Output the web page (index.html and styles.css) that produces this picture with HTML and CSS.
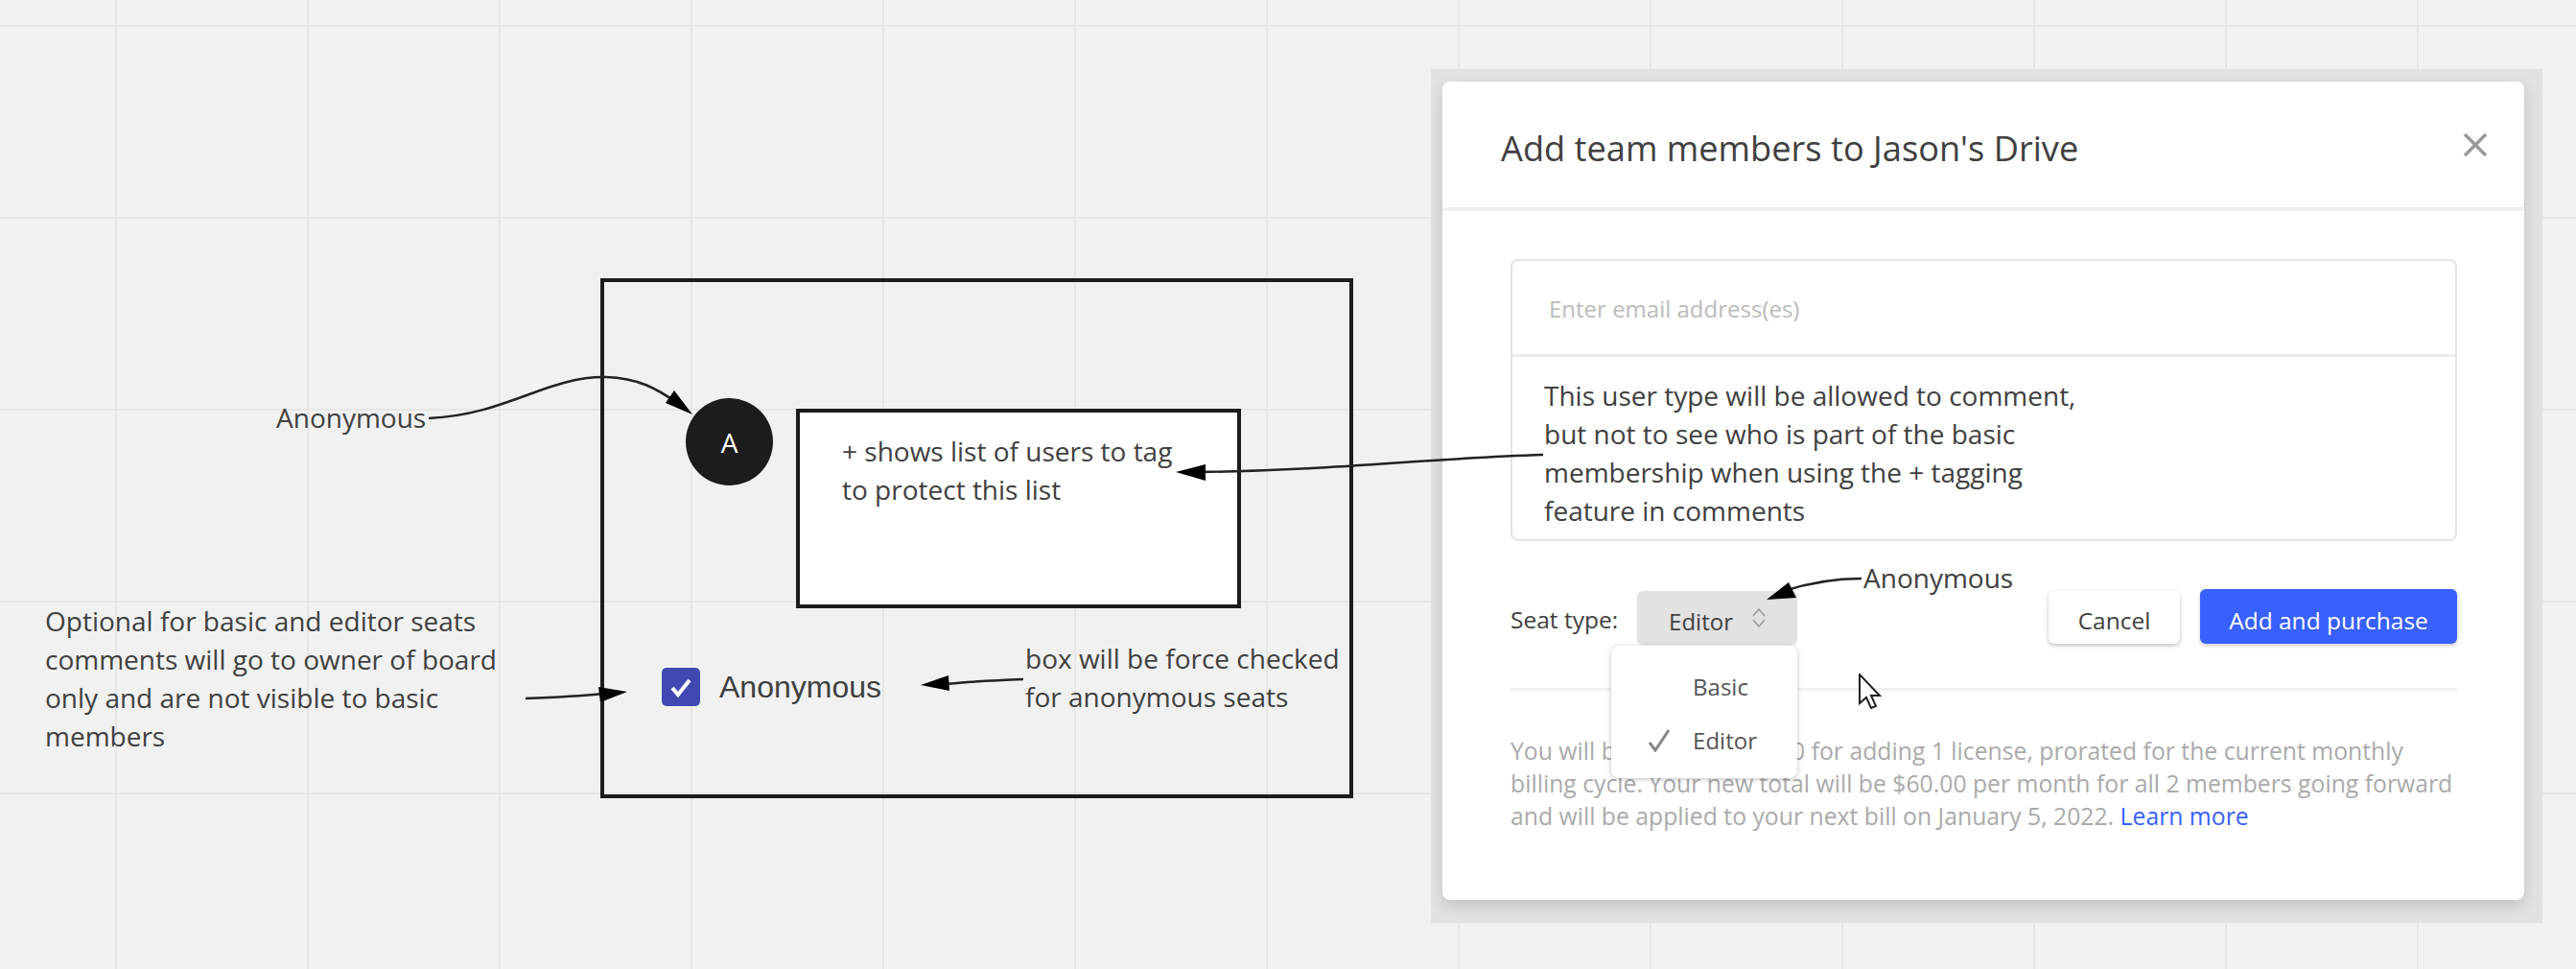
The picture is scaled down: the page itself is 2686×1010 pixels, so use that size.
FILE: index.html
```html
<!DOCTYPE html>
<html lang="en">
<head>
    <meta charset="UTF-8">
    <title>Anonymous seat type - board</title>
    <link rel="stylesheet" href="styles.css">
</head>
<body>
    <div class="board">
        <!-- frame with the mock comment -->
        <div class="frame"></div>
        <div class="avatar">A</div>
        <div class="comment-box">+ shows list of users to tag<br>to protect this list</div>
        <div class="checkbox">
            <svg viewBox="0 0 40 40" width="40" height="40"><path d="M11 21l6 7 12-15" fill="none" stroke="#fff" stroke-width="4"/></svg>
        </div>
        <div class="checkbox-label">Anonymous</div>

        <!-- notes on the board -->
        <div class="note note-anon">Anonymous</div>
        <div class="note note-optional">Optional for basic and editor seats<br>comments will go to owner of board<br>only and are not visible to basic<br>members</div>
        <div class="note note-forced">box will be force checked<br>for anonymous seats</div>

        <!-- pasted dialog screenshot -->
        <div class="shade">
            <div class="dialog">
                <div class="dialog-header">
                    <h1>Add team members to Jason's Drive</h1>
                    <svg class="close" viewBox="0 0 26 26" width="26" height="26"><path d="M2 2l22 22M24 2L2 24" fill="none" stroke="#999" stroke-width="3.5"/></svg>
                </div>
                <div class="dialog-body">
                    <div class="invite-box">
                        <div class="invite-input">Enter email address(es)</div>
                        <div class="invite-text">This user type will be allowed to comment,<br>but not to see who is part of the basic<br>membership when using the + tagging<br>feature in comments</div>
                    </div>
                    <div class="seat-row">
                        <span class="seat-label">Seat type:</span>
                        <div class="seat-select">
                            <span class="seat-value">Editor</span>
                            <svg viewBox="0 0 16 20" width="16" height="20"><path d="M2 8l6-7 6 7M2 12l6 7 6-7" fill="none" stroke="#999" stroke-width="1.5"/></svg>
                            <div class="seat-menu">
                                <div class="seat-option">Basic</div>
                                <div class="seat-option">
                                    <svg class="tick" viewBox="0 0 22 24" width="22" height="24"><path d="M1 14l6 8L21 1" fill="none" stroke="#888" stroke-width="3"/></svg>
                                    Editor
                                </div>
                            </div>
                        </div>
                        <div class="seat-actions">
                            <button class="btn btn-cancel">Cancel</button>
                            <button class="btn btn-add">Add and purchase</button>
                        </div>
                    </div>
                    <p class="billing">You will be charged $30.00 for adding 1 license, prorated for the current monthly<br>billing cycle. Your new total will be $60.00 per month for all 2 members going forward<br>and will be applied to your next bill on January 5, 2022. <a href="#">Learn more</a></p>
                </div>
            </div>
        </div>

        <div class="note note-seat">Anonymous</div>

        <svg class="pointer" viewBox="0 0 24 38" width="24" height="38"><path d="M1 1v30l7-6 5 11 5-2-5-11h9z" fill="#fff" stroke="#222" stroke-width="2"/></svg>

        <!-- connectors -->
        <svg class="arrows" width="2686" height="1010" viewBox="0 0 2686 1010">
            <g fill="none" stroke="#222" stroke-width="2.5">
                <path d="M447 436C530 432 570 392 632 393C665 394 685 405 706 420"/>
                <path d="M548 728C575 727 600 726 630 723"/>
                <path d="M1609 474C1480 478 1400 490 1250 492"/>
                <path d="M1067 708C1040 709 1015 710 985 713"/>
                <path d="M1941 603C1915 603 1885 608 1860 616"/>
            </g>
            <path d="M722 432L694 420L703 407Z"/>
            <path d="M654 721L624 716L626 732Z"/>
            <path d="M1226 492L1257 484L1257 501Z"/>
            <path d="M960 714L989 704L990 720Z"/>
            <path d="M1842 625L1865 607L1873 623Z"/>
        </svg>
    </div>
</body>
</html>
```

FILE: styles.css
```css
html, body {
    margin: 0;
    padding: 0;
}

body {
    font-family: "Open Sans", "Noto Sans", sans-serif;
    color: #404040;
}

.board {
    position: relative;
    width: 2686px;
    height: 1010px;
    overflow: hidden;
    background-color: #f1f1f1;
    background-image:
        linear-gradient(to right, #e6e6e6 2px, transparent 2px),
        linear-gradient(to bottom, #e6e6e6 2px, transparent 2px);
    background-size: 200px 200px;
    background-position: 120px 26px;
}

.frame {
    position: absolute;
    left: 626px;
    top: 290px;
    width: 785px;
    height: 542px;
    box-sizing: border-box;
    border: 4px solid #1c1c1c;
}

.avatar {
    position: absolute;
    left: 715px;
    top: 415px;
    width: 91px;
    height: 91px;
    border-radius: 50%;
    background: #1c1c1c;
    color: #fff;
    font-size: 28px;
    display: flex;
    align-items: center;
    justify-content: center;
}

.comment-box {
    position: absolute;
    left: 830px;
    top: 426px;
    width: 464px;
    height: 208px;
    box-sizing: border-box;
    border: 4px solid #1c1c1c;
    background: #fff;
    padding: 20px 44px;
    font-size: 28px;
    line-height: 40px;
}

.checkbox {
    position: absolute;
    left: 690px;
    top: 696px;
    width: 40px;
    height: 40px;
    border-radius: 5px;
    background: #4048b2;
}

.checkbox svg {
    display: block;
}

.checkbox-label {
    position: absolute;
    left: 750px;
    top: 697px;
    font-family: "Liberation Sans", Arial, sans-serif;
    font-size: 32px;
    line-height: 38px;
    color: #404040;
}

.note {
    position: absolute;
    font-size: 28px;
    line-height: 40px;
    white-space: nowrap;
}

.note-anon {
    left: 288px;
    top: 415px;
}

.note-optional {
    left: 47px;
    top: 627px;
}

.note-forced {
    left: 1069px;
    top: 666px;
}

.note-seat {
    left: 1943px;
    top: 582px;
}

.shade {
    position: absolute;
    left: 1492px;
    top: 72px;
    width: 1159px;
    height: 890px;
    box-sizing: border-box;
    padding: 13px 19px 24px 12px;
    background: #e2e2e2;
    overflow: hidden;
}

.dialog {
    height: 100%;
    background: #fff;
    border-radius: 8px;
    box-shadow: 0 6px 16px rgba(0, 0, 0, 0.14);
}

.dialog-header {
    height: 135px;
    box-sizing: border-box;
    border-bottom: 4px solid #f0f0f0;
    padding: 6px 38px 0 61px;
    display: flex;
    align-items: center;
    justify-content: space-between;
}

.dialog-header h1 {
    margin: 0;
    font-size: 36.2px;
    font-weight: 400;
}

.close {
    margin-bottom: 5px;
}

.dialog-body {
    padding: 50px 70px 0 71px;
}

.invite-box {
    border: 2px solid #e4e4e4;
    border-radius: 8px;
    height: 294px;
    box-sizing: border-box;
}

.invite-input {
    height: 100px;
    box-sizing: border-box;
    border-bottom: 3px solid #ececec;
    padding: 0 0 0 38px;
    font-size: 24px;
    line-height: 99px;
    color: #bbb;
}

.invite-text {
    padding: 20px 0 0 33px;
    font-size: 28px;
    line-height: 40px;
}

.seat-row {
    display: flex;
    align-items: flex-end;
    margin-top: 50px;
    height: 57px;
    font-size: 24px;
}

.seat-label {
    margin: 0 20px 8px 0;
    font-size: 24.5px;
    line-height: 34px;
}

.seat-select {
    position: relative;
    width: 167px;
    height: 55px;
    box-sizing: border-box;
    padding: 0 32px 0 33px;
    background: #e2e2e2;
    border-radius: 6px;
    box-shadow: 0 1px 2px rgba(0, 0, 0, 0.15);
    display: flex;
    align-items: center;
    justify-content: space-between;
}

.seat-value {
    padding-top: 7px;
}

.seat-menu {
    position: absolute;
    right: 0;
    top: 57px;
    width: 194px;
    height: 138px;
    box-sizing: border-box;
    padding-top: 15px;
    background: #fff;
    border-radius: 8px;
    box-shadow: 0 1px 5px rgba(0, 0, 0, 0.25);
    color: #555;
}

.seat-option {
    position: relative;
    padding-left: 85px;
    height: 56px;
    line-height: 56px;
}

.tick {
    position: absolute;
    left: 39px;
    top: 16px;
}

.seat-actions {
    margin-left: auto;
    display: flex;
    align-items: flex-end;
    gap: 21px;
}

.btn {
    font-family: inherit;
    font-size: 24.5px;
    border: none;
    border-radius: 6px;
    height: 55px;
    padding: 6px 0 0;
}

.btn-cancel {
    width: 137px;
    background: #fff;
    color: #404040;
    box-shadow: 0 2px 4px rgba(0, 0, 0, 0.25);
}

.btn-add {
    width: 268px;
    height: 57px;
    padding-top: 8px;
    background: #3860ff;
    color: #fff;
    box-shadow: 0 2px 4px rgba(0, 0, 0, 0.2);
}

.billing {
    margin: 46px 0 0;
    padding-top: 46px;
    border-top: 3px solid #f0f0f0;
    font-size: 24.75px;
    line-height: 34px;
    color: #aaa;
    white-space: nowrap;
}

.billing a {
    color: #3860ff;
    text-decoration: none;
}

.pointer {
    position: absolute;
    left: 1938px;
    top: 702px;
}

.arrows {
    position: absolute;
    left: 0;
    top: 0;
    pointer-events: none;
}
```
